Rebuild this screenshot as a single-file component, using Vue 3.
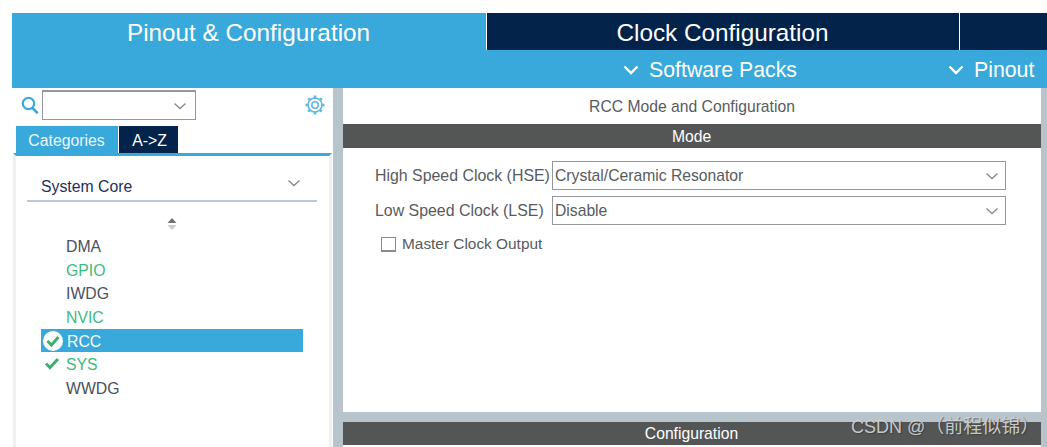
<script setup>
const tabs = [
  { label: 'Pinout & Configuration', cls: 'tab-pinout' },
  { label: 'Clock Configuration', cls: 'tab-clock' },
  { label: '', cls: 'tab-rest' }
]

const items = [
  { name: 'DMA' },
  { name: 'GPIO', ok: true },
  { name: 'IWDG' },
  { name: 'NVIC', ok: true },
  { name: 'RCC', selected: true },
  { name: 'SYS', ok: true, checked: true },
  { name: 'WWDG' }
]

const modes = [
  { label: 'High Speed Clock (HSE)', value: 'Crystal/Ceramic Resonator' },
  { label: 'Low Speed Clock (LSE)', value: 'Disable' }
]
</script>

<template>
  <div class="page">
    <header class="top">
      <nav class="tabs">
        <div v-for="t in tabs" :key="t.cls" class="tab" :class="t.cls">{{ t.label }}</div>
      </nav>
      <div class="subbar">
        <span class="sub sub-packs">
          <svg class="sub-chev" width="16" height="10" viewBox="0 0 16 10"><path d="M1.500 1.500 8 8l6.500-6.500" fill="none" stroke="#fff" stroke-width="2.400" /></svg>
          Software Packs
        </span>
        <span class="sub sub-pinout">
          <svg class="sub-chev" width="16" height="10" viewBox="0 0 16 10"><path d="M1.500 1.500 8 8l6.500-6.500" fill="none" stroke="#fff" stroke-width="2.400" /></svg>
          Pinout
        </span>
      </div>
    </header>

    <main class="main">
      <aside class="side">
        <div class="search">
          <svg class="search-icon" width="18" height="18" viewBox="0 0 18 18">
            <circle cx="7.500" cy="7.500" r="5.700" fill="none" stroke="#3aa9dc" stroke-width="2.200" />
            <path d="M11.500 12l4.500 4.500" stroke="#3aa9dc" stroke-width="2.600" stroke-linecap="round" />
          </svg>
          <div class="combo">
            <svg class="chev" width="14" height="8" viewBox="0 0 14 8"><path d="M1.500 1.500 7 6.500l5.500-5" fill="none" stroke="#85898d" stroke-width="1.300" /></svg>
          </div>
          <svg class="gear" width="22" height="22" viewBox="0 0 22 22">
            <g fill="none" stroke="#5cb8e6">
              <circle cx="11" cy="11" r="3.200" stroke-width="1.500" />
              <circle cx="11" cy="11" r="7" stroke-width="1.600" />
              <path d="M11 1.500v3M11 17.500v3M1.500 11h3M17.500 11h3M4.300 4.300l2.100 2.100M15.600 15.600l2.100 2.100M4.300 17.700l2.100-2.100M15.600 6.400l2.100-2.100" stroke-width="2.600" />
            </g>
          </svg>
        </div>

        <div class="side-tabs">
          <div class="side-tab active">Categories</div>
          <div class="side-tab">A-&gt;Z</div>
        </div>

        <div class="side-body">
          <div class="category">
            <span>System Core</span>
            <svg width="14" height="8" viewBox="0 0 14 8"><path d="M1.500 1.500 7 6.500l5.500-5" fill="none" stroke="#85898d" stroke-width="1.300" /></svg>
          </div>
          <svg class="sort" width="10" height="14" viewBox="0 0 10 14">
            <path d="M5 1 9.500 6h-9z" fill="#6f7377" />
            <path d="M5 13 9.500 8h-9z" fill="#c9cccf" />
          </svg>
          <ul class="list">
            <li v-for="i in items" :key="i.name" class="item" :class="{ ok: i.ok, selected: i.selected }">
              <svg v-if="i.selected" class="mark" width="22" height="22" viewBox="0 0 22 22">
                <circle cx="11" cy="11" r="10" fill="#fff" />
                <path d="M5.500 11l4 4 7-8" fill="none" stroke="#3fae6f" stroke-width="3" />
              </svg>
              <svg v-else-if="i.checked" class="mark" width="22" height="22" viewBox="0 0 22 22">
                <path d="M4 10.500l4 4 8-8.500" fill="none" stroke="#3fae6f" stroke-width="3" />
              </svg>
              <span class="item-name">{{ i.name }}</span>
            </li>
          </ul>
        </div>
      </aside>

      <div class="splitter"></div>

      <section class="content">
        <div class="mode-panel">
          <h2 class="panel-title">RCC Mode and Configuration</h2>
          <div class="bar">Mode</div>
          <div class="form">
            <div v-for="m in modes" :key="m.label" class="row">
              <label class="row-label">{{ m.label }}</label>
              <div class="select">
                <span>{{ m.value }}</span>
                <svg width="14" height="8" viewBox="0 0 14 8"><path d="M1.500 1.500 7 6.500l5.500-5" fill="none" stroke="#85898d" stroke-width="1.300" /></svg>
              </div>
            </div>
            <div class="check-row">
              <span class="checkbox"></span>
              <span>Master Clock Output</span>
            </div>
          </div>
        </div>
        <div class="gap"></div>
        <div class="bar bar-config">Configuration</div>
      </section>

      <div class="scroll"></div>
    </main>

    <div class="watermark">CSDN @<span class="watermark-cjk">（前程似锦）</span></div>
  </div>
</template>

<style>
html, body {
  margin: 0;
  background: #fff;
  overflow: hidden;
}
</style>

<style scoped>
.page {
  position: relative;
  width: 1047px;
  height: 447px;
  box-sizing: border-box;
  padding: 13px 0 0 12px;
  font-family: "Liberation Sans", Arial, sans-serif;
  overflow: hidden;
}

.tabs {
  display: flex;
  height: 37px;
}

.tab {
  display: flex;
  align-items: center;
  justify-content: center;
  box-sizing: border-box;
  color: #fff;
  font-size: 24.300px;
  padding-top: 3px;
  padding-right: 1px;
}

.tab-pinout {
  width: 475px;
  background: #39a9db;
  border-right: 1px solid #fff;
}

.tab-clock {
  width: 473px;
  background: #03234b;
  border-right: 1px solid #fff;
}

.tab-rest {
  flex: 1;
  background: #03234b;
}

.subbar {
  position: relative;
  display: flex;
  height: 38px;
  box-sizing: border-box;
  padding-top: 2px;
  align-items: center;
  background: #39a9db;
  color: #fff;
  font-size: 21.300px;
}

.sub {
  display: flex;
  align-items: center;
  gap: 10px;
}

.sub-packs {
  margin-left: 611px;
}

.sub-pinout {
  margin-left: 151px;
}

.main {
  display: flex;
  height: 359px;
}

.side {
  width: 321px;
  flex: none;
  display: flex;
  flex-direction: column;
}

.search {
  display: flex;
  align-items: flex-start;
  height: 38px;
  padding-top: 2px;
  box-sizing: border-box;
}

.search-icon {
  margin: 6px 3px 0 9px;
}

.combo {
  width: 154px;
  height: 30px;
  box-sizing: border-box;
  border: 1.500px solid #94989d;
  border-top-width: 2px;
  display: flex;
  align-items: center;
  justify-content: flex-end;
  padding-right: 8px;
}

.gear {
  margin: 4px 0 0 108px;
}

.side-tabs {
  display: flex;
  height: 27px;
  margin-left: 4px;
  gap: 1px;
}

.side-tab {
  display: flex;
  align-items: center;
  justify-content: center;
  box-sizing: border-box;
  width: 59px;
  padding: 2px 0 0 2px;
  background: #03234b;
  color: #fff;
  font-size: 15.800px;
}

.side-tab.active {
  width: 102px;
  padding: 2px 1px 0 0;
  background: #39a9db;
  color: #eaf6fc;
}

.side-body {
  flex: 1;
  margin-left: 1px;
  width: 319px;
  box-sizing: border-box;
  border-top: 3px solid #39a9db;
  border-left: 3px solid #eef1f4;
  border-right: 3px solid #eef1f4;
  padding: 14px 12px 0 11px;
  display: flex;
  flex-direction: column;
}

.category {
  display: flex;
  align-items: center;
  justify-content: space-between;
  height: 26px;
  box-sizing: content-box;
  padding: 4px 16px 0 14px;
  border-bottom: 2px solid #bcc8d6;
  color: #22305f;
  font-size: 15.800px;
}

.category svg {
  margin-top: -8px;
}

.sort {
  align-self: center;
  margin: 15px 1px 0 0;
}

.list {
  list-style: none;
  margin: 3px 0 0 14px;
  padding: 0;
  width: 262px;
}

.item {
  position: relative;
  display: flex;
  align-items: center;
  box-sizing: border-box;
  height: 23.700px;
  padding: 2px 0 0 25px;
  color: #4b5160;
  font-size: 15.800px;
}

.item.ok {
  color: #3dbb7c;
}

.item.selected {
  background: #39a9db;
  color: #fff;
  padding-left: 26px;
}

.mark {
  position: absolute;
  left: 1px;
  top: 1px;
}

.splitter {
  width: 10px;
  flex: none;
  background: #b8c4cc;
}

.content {
  width: 698px;
  flex: none;
  display: flex;
  flex-direction: column;
}

.mode-panel {
  height: 324px;
}

.panel-title {
  margin: 0;
  height: 36px;
  line-height: 37px;
  text-align: center;
  font-weight: 400;
  font-size: 15.700px;
  color: #575b60;
}

.bar {
  height: 24px;
  line-height: 25px;
  padding-right: 1px;
  text-align: center;
  background: #545655;
  color: #fff;
  font-size: 15.700px;
}

.bar-config {
  height: 23px;
  line-height: 23px;
}

.gap {
  height: 10px;
  background: #b8c4cc;
}

.form {
  padding: 13px 0 0 32px;
  display: flex;
  flex-direction: column;
  color: #575b60;
  font-size: 15.700px;
}

.row {
  display: flex;
  align-items: center;
  height: 29px;
  margin-bottom: 6px;
}

.row-label {
  width: 177px;
  flex: none;
  font-size: 15.900px;
}

.select {
  width: 454px;
  height: 29px;
  box-sizing: border-box;
  border: 1.500px solid #94989d;
  display: flex;
  align-items: center;
  justify-content: space-between;
  padding: 0 6px 0 2px;
}

.check-row {
  display: flex;
  align-items: center;
  gap: 6px;
  margin: 4px 0 0 6px;
  font-size: 15.400px;
}

.checkbox {
  width: 15px;
  height: 15px;
  box-sizing: border-box;
  border: 1px solid #8a8a8a;
  border-bottom-width: 2px;
  background: #fff;
}

.scroll {
  flex: 1;
  background: #b8c4cc;
}

.watermark {
  position: absolute;
  left: 851px;
  top: 415px;
  color: rgba(205, 209, 212, 0.95);
  font-size: 18px;
  line-height: 24px;
  font-family: "Liberation Sans", "Noto Sans CJK SC", sans-serif;
  text-shadow: 1px 1px 1px rgba(50, 50, 50, 0.65);
  white-space: nowrap;
}

.watermark-cjk {
  font-size: 19px;
}
</style>
